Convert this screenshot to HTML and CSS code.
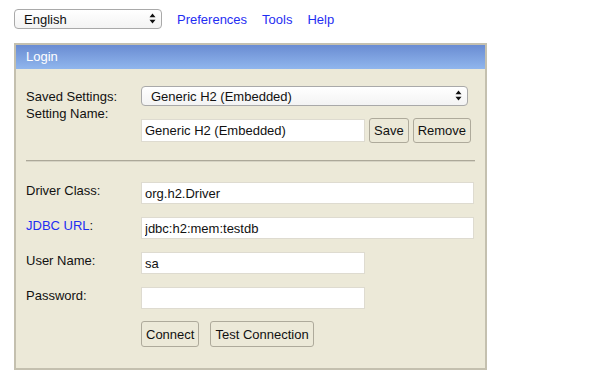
FILE: index.html
```html
<!DOCTYPE html>
<html lang="en">
<head>
    <meta charset="UTF-8">
    <meta name="viewport" content="width=device-width, initial-scale=1.0">
    <title>H2 Console</title>
    <link rel="stylesheet" href="styles.css">
</head>
<body>
    <div class="topbar">
        <div class="select-wrap lang">
            <select class="select"><option>English</option></select>
            <svg class="arrows" width="7" height="11" viewBox="0 0 7 11"><path d="M3.5 0.5 L6.5 4.2 H0.5 Z M3.5 10.5 L0.5 6.8 H6.5 Z"/></svg>
        </div>
        <a class="toplink" href="#">Preferences</a>
        <a class="toplink" href="#">Tools</a>
        <a class="toplink" href="#">Help</a>
    </div>

    <div class="login">
        <div class="login-head">Login</div>
        <div class="login-body">
            <div class="row saved">
                <label class="label">Saved Settings:</label>
                <div class="select-wrap wide">
                    <select class="select"><option>Generic H2 (Embedded)</option></select>
                    <svg class="arrows" width="7" height="11" viewBox="0 0 7 11"><path d="M3.5 0.5 L6.5 4.2 H0.5 Z M3.5 10.5 L0.5 6.8 H6.5 Z"/></svg>
                </div>
            </div>
            <div class="row setting">
                <label class="label">Setting Name:</label>
                <div class="controls">
                    <input class="field short" type="text" value="Generic H2 (Embedded)">
                    <button class="btn">Save</button>
                    <button class="btn">Remove</button>
                </div>
            </div>

            <hr class="divider">

            <div class="row first">
                <label class="label">Driver Class:</label>
                <input class="field long" type="text" value="org.h2.Driver">
            </div>
            <div class="row">
                <label class="label"><a class="jdbc" href="#">JDBC URL</a>:</label>
                <input class="field long" type="text" value="jdbc:h2:mem:testdb">
            </div>
            <div class="row">
                <label class="label">User Name:</label>
                <input class="field short" type="text" value="sa">
            </div>
            <div class="row">
                <label class="label">Password:</label>
                <input class="field short" type="password" value="">
            </div>
            <div class="row actions">
                <span class="label"></span>
                <button class="btn">Connect</button>
                <button class="btn">Test Connection</button>
            </div>
        </div>
    </div>
</body>
</html>
```

FILE: styles.css
```css
body {
    margin: 0;
    padding: 9px 14px;
    font: 13px "Liberation Sans", Arial, sans-serif;
    color: #111;
    background: #fff;
}
.topbar {
    display: flex;
    align-items: center;
    gap: 15px;
    height: 20px;
}
.toplink {
    color: #1f2ef2;
    text-decoration: none;
}
.select-wrap {
    position: relative;
    height: 20px;
}
.select-wrap.lang {
    width: 148px;
}
.select-wrap.wide {
    width: 327px;
}
.select {
    appearance: none;
    -webkit-appearance: none;
    width: 100%;
    height: 20px;
    box-sizing: border-box;
    margin: 0;
    padding: 0 0 0 9px;
    font: 13px "Liberation Sans", Arial, sans-serif;
    color: #111;
    background: linear-gradient(#ffffff, #f3f3f3);
    border: 1px solid #a9a9a9;
    border-radius: 4px;
}
.arrows {
    position: absolute;
    right: 6px;
    top: 4px;
    fill: #111;
}
.login {
    width: 473px;
    box-sizing: border-box;
    margin-top: 14px;
    background: #ece9d8;
    border: 2px solid #c4c0af;
}
.login-head {
    height: 24px;
    line-height: 24px;
    padding-left: 10px;
    color: #fff;
    background: linear-gradient(#6a8cd2, #90b6ed);
}
.login-body {
    padding: 17px 10px 21px;
}
.row {
    display: flex;
    align-items: flex-start;
    margin-top: 13px;
}
.row.saved {
    margin-top: 0;
}
.row.setting {
    margin-top: 0;
}
.row.first {
    margin-top: 20px;
}
.row.actions {
    margin-top: 12px;
    gap: 11px;
}
.label {
    width: 115px;
    flex: none;
    line-height: 15px;
    padding-top: 1px;
}
.row.saved .label {
    padding-top: 3px;
}
.row.setting .label {
    padding-top: 0;
}
.row.actions .label {
    margin-right: -11px;
}
.jdbc {
    color: #1f2ef2;
    text-decoration: none;
}
.controls {
    display: flex;
    align-items: center;
    gap: 4px;
    margin-top: 12px;
    height: 25px;
}
.field {
    box-sizing: border-box;
    height: 22px;
    margin: 0;
    padding: 0 3px;
    font: 13px "Liberation Sans", Arial, sans-serif;
    color: #111;
    background: #fff;
    border: 1px solid #dedbd0;
}
.controls .field {
    height: 23px;
}
.field.short {
    width: 224px;
}
.field.long {
    width: 333px;
}
.btn {
    height: 25px;
    margin: 0;
    padding: 0 4px;
    font: 13px "Liberation Sans", Arial, sans-serif;
    color: #111;
    background: #ece9d8;
    border: 1px solid #aeaa9b;
    border-radius: 3px;
}
.actions .btn {
    height: 26px;
}
.divider {
    height: 0;
    margin: 17px 0 0;
    border: 0;
    border-top: 1px solid #aca899;
    border-bottom: 1px solid #d6d3c4;
}
```
